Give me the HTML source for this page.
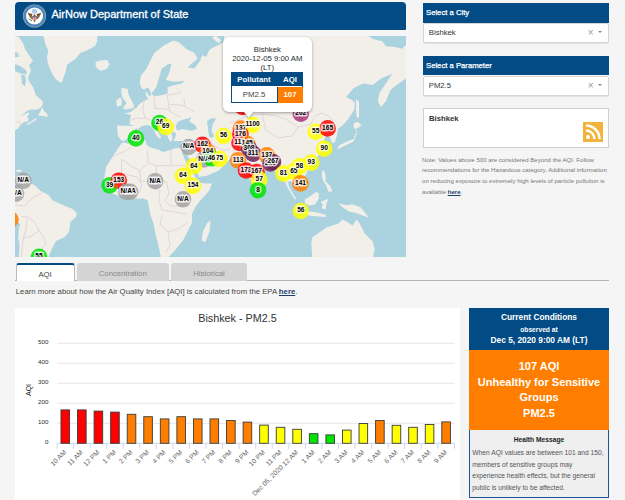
<!DOCTYPE html>
<html><head><meta charset="utf-8">
<style>
*{margin:0;padding:0;box-sizing:border-box}
html,body{width:625px;height:500px;overflow:hidden;background:#f5f5f5;font-family:"Liberation Sans",sans-serif;position:relative}
.a{position:absolute}
.wh{background:#fff}
.hdr{left:15px;top:2px;width:391px;height:28px;background:#034b85;border-radius:4px 4px 1px 1px}
.ttl{left:51.5px;top:8px;color:#fff;font-size:11px;line-height:12px;white-space:nowrap;-webkit-text-stroke:0.3px #fff}
.map{left:15px;top:36px;width:391px;height:221px;overflow:hidden;background:#aad3df}
.sh{left:423px;width:186px;height:19.5px;background:#034b85;color:#fff;font-size:7.7px;line-height:19px;padding-left:3px;white-space:nowrap;-webkit-text-stroke:0.25px #fff}
.sel{left:422.8px;width:186.2px;height:19.6px;background:#fff;border:1px solid #d6d6d6;border-radius:2px;font-size:7.7px;line-height:17px;padding-left:5px;color:#333;box-shadow:0 1px 1px rgba(0,0,0,.08)}
.sel .x{position:absolute;right:14.5px;top:0.5px;color:#9a9a9a;font-size:10px;line-height:16px}
.sel .car{position:absolute;right:6px;top:7px;width:0;height:0;border-left:2.3px solid transparent;border-right:2.3px solid transparent;border-top:2.5px solid #888}
.tab{top:263px;height:18px;font-size:7.7px;line-height:17px;padding-top:1.5px;text-align:center;color:#888;background:#d4d4d4;border-radius:3px 3px 0 0}
.note{left:422px;top:154.5px;width:190px;font-size:6.1px;line-height:10.7px;color:#777}
.cc{left:469px;top:308px;width:140px;height:190px;border:1px solid #1c5794;background:#efefef}
</style></head><body>
<!-- left white panel -->
<div class="a hdr"></div>
<svg class="a" style="left:22px;top:4px" width="25" height="25" viewBox="0 0 25 25">
<circle cx="12.5" cy="12" r="11.6" fill="#b9b58a"/>
<circle cx="12.5" cy="12" r="11" fill="#4a85c4"/>
<circle cx="12.5" cy="12" r="8.6" fill="#e9eef3"/>
<circle cx="12.5" cy="12" r="8" fill="#fff"/>
<circle cx="12.5" cy="7.2" r="2.6" fill="#a9cde8"/>
<path d="M5.5 8.5 Q7 12 9.5 12.5 L10.5 10 Q8 9.5 5.5 8.5Z M19.5 8.5 Q18 12 15.5 12.5 L14.5 10 Q17 9.5 19.5 8.5Z" fill="#6d4a2a"/>
<path d="M6 9.5 Q8 15 11 15.5 L12.5 18.5 L14 15.5 Q17 15 19 9.5 Q16.5 13 14 12 L12.5 10 L11 12 Q8.5 13 6 9.5Z" fill="#8a6238"/>
<rect x="10.8" y="12.2" width="3.4" height="4" fill="#fff"/>
<rect x="10.8" y="12.2" width="3.4" height="1.3" fill="#3a5a9a"/>
<path d="M11.3 13.5v2.7M12.5 13.5v2.7M13.7 13.5v2.7" stroke="#d03030" stroke-width="0.6"/>
<path d="M7 14.5 Q8 16.5 10 16.8" stroke="#4a8a3a" stroke-width="1" fill="none"/>
<circle cx="12.5" cy="4.8" r="0.6" fill="#fff"/>
</svg>
<div class="a ttl">AirNow Department of State</div>

<div class="a map" id="map"><svg class="a" style="left:0;top:0" width="391" height="221" viewBox="15 36 391 221">
<rect x="15" y="36" width="391" height="221" fill="#aad3df"/>
<polygon points="15,36 19,37 23,43 25,49 29,55 33,61 29,65 31,70 29,75 28,78 29,81 33,87 35.8,95 39,98.2 42.2,100.6 43,103.8 41.4,107 37.4,109.4 31,109.4 27,111 23,114.2 19.8,116.6 24.6,114.2 28.6,112.6 29.4,114.2 27,116.6 28.6,119 27.8,121.4 25.4,121.4 23,123 19.8,125.4 18.2,128.6 15,130.2" fill="#f2efe9" />
<polygon points="38.2,115 40.6,111 42.2,107 43.8,111 47,113.4 47.8,117.4 45.4,116.6 42.2,115.8 39,115.8" fill="#f2efe9" />
<polygon points="27,123.8 31,121.4 35.8,118.2 36.6,119.8 31,123 27.8,125" fill="#f2efe9" />
<polygon points="43.2,36 97.5,36 97,42 95,45.9 86.7,50.4 80.3,52.9 75.2,59.3 70,62.5 66.8,65.1 65.6,72.1 63.6,77.2 61.7,83 57.2,80.4 53.4,76 50.2,69.6 47.6,62.5 47,56.8 48.3,50.4 45.7,45.2 43.8,37.6" fill="#f2efe9" />
<polygon points="95.6,61.9 100.1,60.6 107.2,60 109.7,64.4 106.5,68.9 101.4,70.8 97.6,68.9 95.6,65.7" fill="#f2efe9" />
<polygon points="16,170 20.5,169.5 22,171.5 17,172" fill="#f2efe9" />
<polygon points="15,187.1 30.4,183.3 35.5,185.8 40.6,191 48.3,194.8 52.1,199.9 59.8,203.8 72.6,209 76.4,212.8 76.4,216.6 70.6,221.8 68.8,232 64.9,237.1 56,241 53.4,246.1 50.8,251.2 48.3,257.6 18.8,257.6 19.5,244.8 18.2,238.4 18.8,229.4 20.1,224.3 15,220" fill="#f2efe9" />
<polygon points="139.8,83.8 141.5,88 143.6,89.5 148.4,87.6 150.5,92 151.3,95.3 149,96 147.5,93 145.5,91.4 146,96 148.4,99.1 144,101 140.7,103 138,105.5 136.8,107.5 134,109 131,112 124.5,113.5 131,115 130,120 129.5,124 134,126 117.5,125.5 117,127 118,136 121,140 124,141.5 121,144 117,150 112.6,156.6 106,167.6 103.8,180.8 108.2,191.8 119.2,196.2 130.2,198.4 143.4,198.4 147.8,200.6 150,213.8 153.3,222.7 155.5,233.7 158.8,246.9 161,257.6 168,257.6 174.3,251.3 183.1,240.3 187.5,231.5 191.9,222.7 192,213.8 196,206 200.6,200 204.4,196.3 209.6,189.9 212.1,183.5 205.7,183.5 198,182.2 198,177.1 207,175.8 218.5,170.7 224.9,164.3 228.8,160.5 232,157 236,158 240,162 244,168 248,175 252,182 256,188 258,182 262,175 265,170 270,170 277,172 280,174 283,178 285,182 287.5,187.2 291.1,193.5 294.7,198.9 296.5,199.4 294.7,196.2 290.2,189 287.5,181.8 291,181 293,183 296,186 300,188 304,182 305,176 308,170 312,164 316,158 320.5,153.5 324.4,145 324,140 326,135.7 330.1,137.3 331.7,143 334.9,142.2 336.5,137.3 338,129 343,125 349,118 354,110 355,103 352,100 346,97 353.5,88.3 363.2,83.5 372.9,85.1 381,78.6 392.3,73.8 385.8,83.5 379.3,93.2 378,102 381,107 386,101 390.6,90 398,84 406,78.6 406,44.7 402,48.7 395.5,47.1 385.8,46.3 382.6,41.5 372.9,39 368,36 224,36 224,43 221.4,43.4 209.8,49.2 206,56.9 202.2,55 200.2,60.7 194.5,68.4 187.8,67.4 190.6,64.6 197.4,58.8 194.5,53 186.8,49.2 179.1,42.5 173.4,40.6 163.8,45.4 154.2,53 146.5,68.4 140.7,76.1" fill="#f2efe9" />
<polygon points="212,37 216,36 221,40 219,43 214,40" fill="#f2efe9" />
<polygon points="121.4,87.8 127.8,89.1 128.4,94.2 131.6,100.6 134.2,105.7 132.9,108.3 125.2,109.6 122.7,108.3 126.5,103.2 122.7,98 121.4,94.2" fill="#f2efe9" />
<polygon points="116.3,100.6 120.1,97.4 122,100 121.4,105.7 116.9,106.4" fill="#f2efe9" />
<polygon points="207.3,222.7 210.6,220.5 209.5,231.5 205.1,242.5 201.8,240.3 202.9,231.5 206.2,224.9" fill="#f2efe9" />
<polygon points="355.1,127.6 356.7,130.9 353.5,138.9 345.4,142.2 338.9,145.4 337.3,149.4 342.2,147 353.5,141.4 356.7,134.1" fill="#f2efe9" />
<polygon points="356,99 359,102 359,117 357,118 356,110 356,103" fill="#f2efe9" />
<polygon points="354,123 358,122 361.5,125 358,128 355,129 353.5,127" fill="#f2efe9" />
<polygon points="322,171 324,170 325,176 323,178" fill="#f2efe9" />
<polygon points="321.7,171.9 325.6,173.8 325.6,181.5 330.4,186.3 332.3,191.2 328.5,192.1 326.5,186.3 322.7,179.6" fill="#f2efe9" />
<polygon points="304.4,199.8 309.2,196.9 316,192.1 318.8,193.1 318.8,198.8 315,204.6 309.2,205.6 305.4,203.7" fill="#f2efe9" />
<polygon points="303,211 315,212 326,215 326,217 312,216 303,214" fill="#f2efe9" />
<polygon points="320.8,201.7 328.5,198.8 326.5,203.7 325.6,209.4 321.7,208.5 322.7,204.6" fill="#f2efe9" />
<polygon points="338.5,203.2 346.5,205.2 352.6,204.2 360.6,207.3 368.7,217.3 364.7,216.3 356.6,213.3 348.5,211.3 342.5,207.3" fill="#f2efe9" />
<polygon points="312.3,237.5 326.4,227.4 338.5,223.4 342.5,219.4 346.5,221.4 352.6,225.4 356.6,219.4 359.6,223.4 364.7,233.5 372.7,241.5 374.8,249.6 372.7,257.6 312.3,257.6 311.3,243.5" fill="#f2efe9" />
<polygon points="15,64 20,66 26,70 27,74 22,74 17,72 15,71" fill="#aad3df" />
<polygon points="21,75 25,75 26,80 25,86 22,84" fill="#aad3df" />
<polygon points="15,52 18,53 19,57 15,57" fill="#aad3df" />
<polygon points="123.5,141 127,139 131,134 134,131 136,128 137.6,129.5 141.4,126.3 146.6,125 150.4,125.7 154.2,130.8 156.8,136 159.4,138.5 161.3,137.2 158,132 154.5,127 151.5,123 154,121.5 158,124 162,128 166,131 167,134.6 169,140 171,142.3 172.5,138 171.5,133 174,131.5 176,134 175,138 173.4,141 181,141 188.8,142.3 189,147 183.7,148.7 176,148 169.6,150 163.2,152 158,149.4 150.4,147.4 146.6,144.9 145.3,139.8 144,140.4 137.6,142.3 127.4,143.6 123.5,142.5" fill="#aad3df" />
<polygon points="175.7,126.9 177,123 179,121.3 184.6,119 188,118.5 191.4,116.8 190.5,119 189.1,121.3 192,123 195.8,125.8 197,129.1 193,130.5 190.2,130.8 186,129.8 182.4,129.1 179,130 176.8,130.2" fill="#aad3df" />
<polygon points="207,121.3 210,119 213.8,117.9 216,119 214,122 212.6,124.6 211.5,130.2 213.8,135.8 212.6,138.1 209.3,137 208.5,133 208.2,129.1 207.5,125" fill="#aad3df" />
<polygon points="167.6,64.6 171.4,63.6 169.5,72.2 165.7,79.9 173.4,81.8 184.9,80.9 181,83.8 171.4,85.7 167.6,87.6 167.6,93.4 161.8,95.3 154.2,96.2 151.3,93.4 156.1,87.6 159,78 161.8,68.4" fill="#aad3df" />
<polygon points="182,149 184,150 190,160 195,168 199,176 198.5,181 196,178 191,170 186,162 182,153" fill="#aad3df" />
<polygon points="214,153 219,156 224,160 221,161 216,158" fill="#aad3df" />
<polyline points="105,165.6 112.7,156.6 117.8,154.1 124.2,151.5 130.6,147.7" fill="none" stroke="#d6c3d0" stroke-width="0.6"/>
<polyline points="121.6,159.2 130.6,165.6 139.6,170.7 148.5,163 156.2,165.6 169,165.6 171.6,166.9" fill="none" stroke="#d6c3d0" stroke-width="0.6"/>
<polyline points="147.2,150.2 148.5,163" fill="none" stroke="#d6c3d0" stroke-width="0.6"/>
<polyline points="170.9,149 170.9,165.6" fill="none" stroke="#d6c3d0" stroke-width="0.6"/>
<polyline points="171.6,165.6 185,165.6" fill="none" stroke="#d6c3d0" stroke-width="0.6"/>
<polyline points="156.2,165.6 156.2,177.1 166.4,182.2 169,193.8 165.2,200 170,206 178,206 186,204" fill="none" stroke="#d6c3d0" stroke-width="0.6"/>
<polyline points="121.6,159.2 121.6,173.3 115.2,178.4" fill="none" stroke="#d6c3d0" stroke-width="0.6"/>
<polyline points="121.6,173.3 137,177.1 142.1,184.8 138.3,193.8" fill="none" stroke="#d6c3d0" stroke-width="0.6"/>
<polyline points="139.6,170.7 140.9,181 151.1,182.2" fill="none" stroke="#d6c3d0" stroke-width="0.6"/>
<polyline points="151.1,182.2 160,191.2 158.8,200" fill="none" stroke="#d6c3d0" stroke-width="0.6"/>
<polyline points="158.8,200 162,210 175,212 186,214" fill="none" stroke="#d6c3d0" stroke-width="0.6"/>
<polyline points="162,215 160,225 168,232 180,228 188,222" fill="none" stroke="#d6c3d0" stroke-width="0.6"/>
<polyline points="168,232 170,245 166,252" fill="none" stroke="#d6c3d0" stroke-width="0.6"/>
<polyline points="154.3,97.8 155.6,109.3" fill="none" stroke="#d6c3d0" stroke-width="0.6"/>
<polyline points="144.1,101.6 142.8,110.6 145.4,118.3" fill="none" stroke="#d6c3d0" stroke-width="0.6"/>
<polyline points="167.1,95.2 169.7,110.6" fill="none" stroke="#d6c3d0" stroke-width="0.6"/>
<polyline points="169.7,104.2 183.8,105.5 194,111.9" fill="none" stroke="#d6c3d0" stroke-width="0.6"/>
<polyline points="183.8,98 185,105.5" fill="none" stroke="#d6c3d0" stroke-width="0.6"/>
<polyline points="153,108 167,109.3 174.8,114.4 181,117" fill="none" stroke="#d6c3d0" stroke-width="0.6"/>
<polyline points="167.1,95.2 181,92.7 176,87.5" fill="none" stroke="#d6c3d0" stroke-width="0.6"/>
<polyline points="131,120 137,118 145.4,118.3 150,120" fill="none" stroke="#d6c3d0" stroke-width="0.6"/>
<polyline points="275.8,115.8 285.4,119 298.2,127 311,123.8 315,115.8 322,113 330,117 334,123" fill="none" stroke="#d6c3d0" stroke-width="0.6"/>
<polyline points="230,123 238,120 246,116 262,114 275.8,115.8" fill="none" stroke="#d6c3d0" stroke-width="0.6"/>
<polyline points="262,114 266,130 278,138 292,136 298.2,127" fill="none" stroke="#d6c3d0" stroke-width="0.6"/>
<polyline points="200,138 210,142 215,146 222,150 230,150" fill="none" stroke="#d6c3d0" stroke-width="0.6"/>
<polyline points="232,157 234,150 236,144" fill="none" stroke="#d6c3d0" stroke-width="0.6"/>
<polyline points="21.4,216.6 27.8,216.6 34.2,221.8 39.3,230.7 44.4,238.4 45.7,243.5 40.6,251.2" fill="none" stroke="#d6c3d0" stroke-width="0.6"/>
<polyline points="15,205 25,206 30,200 35,196 42,193" fill="none" stroke="#d6c3d0" stroke-width="0.6"/>
<polyline points="22.7,238 30,237 39.3,230.7" fill="none" stroke="#d6c3d0" stroke-width="0.6"/>
<polyline points="27,218 26,230 23,240 21,257" fill="none" stroke="#d6c3d0" stroke-width="0.6"/>
<polyline points="20.8,124 19,121 16,123" fill="none" stroke="#d6c3d0" stroke-width="0.6"/>
<circle cx="16" cy="193.6" r="8.3" fill="#a3a3a3" fill-opacity="0.85"/>
<circle cx="23.3" cy="180.8" r="8.3" fill="#a3a3a3" fill-opacity="0.85"/>
<circle cx="10.5" cy="219.5" r="8.3" fill="#ff7e00" fill-opacity="0.85"/>
<circle cx="39" cy="256.8" r="8.3" fill="#00e400" fill-opacity="0.85"/>
<circle cx="109.6" cy="185.3" r="8.3" fill="#00e400" fill-opacity="0.85"/>
<circle cx="118.8" cy="180.7" r="8.3" fill="#ff0000" fill-opacity="0.85"/>
<circle cx="130.1" cy="191.8" r="8.3" fill="#a3a3a3" fill-opacity="0.85"/>
<circle cx="126.3" cy="191.8" r="8.3" fill="#a3a3a3" fill-opacity="0.85"/>
<circle cx="155.2" cy="181.2" r="8.3" fill="#a3a3a3" fill-opacity="0.85"/>
<circle cx="183" cy="199.3" r="8.3" fill="#a3a3a3" fill-opacity="0.85"/>
<circle cx="135.9" cy="138.4" r="8.3" fill="#00e400" fill-opacity="0.85"/>
<circle cx="159.5" cy="123" r="8.3" fill="#00e400" fill-opacity="0.85"/>
<circle cx="165.7" cy="126.9" r="8.3" fill="#ffff00" fill-opacity="0.85"/>
<circle cx="188.7" cy="147" r="8.3" fill="#a3a3a3" fill-opacity="0.85"/>
<circle cx="202.5" cy="144.8" r="8.3" fill="#ff0000" fill-opacity="0.85"/>
<circle cx="207.8" cy="151.8" r="8.3" fill="#ff7e00" fill-opacity="0.85"/>
<circle cx="204" cy="159.5" r="8.3" fill="#a3a3a3" fill-opacity="0.85"/>
<circle cx="211.6" cy="158.3" r="8.3" fill="#00e400" fill-opacity="0.85"/>
<circle cx="219.6" cy="159" r="8.3" fill="#ffff00" fill-opacity="0.85"/>
<circle cx="223.6" cy="136" r="8.3" fill="#ffff00" fill-opacity="0.85"/>
<circle cx="183" cy="175.8" r="8.3" fill="#ffff00" fill-opacity="0.85"/>
<circle cx="193.8" cy="166.2" r="8.3" fill="#ffff00" fill-opacity="0.85"/>
<circle cx="193" cy="186" r="8.3" fill="#ffff00" fill-opacity="0.85"/>
<circle cx="242.5" cy="107" r="8.3" fill="#ff0000" fill-opacity="0.85"/>
<circle cx="300.8" cy="113.6" r="8.3" fill="#aa3377" fill-opacity="0.85"/>
<circle cx="240.8" cy="128.6" r="8.3" fill="#ff7e00" fill-opacity="0.85"/>
<circle cx="252.6" cy="125" r="8.3" fill="#ffff00" fill-opacity="0.85"/>
<circle cx="240.4" cy="134.2" r="8.3" fill="#ff0000" fill-opacity="0.85"/>
<circle cx="239.5" cy="143" r="8.3" fill="#ff0000" fill-opacity="0.85"/>
<circle cx="247.3" cy="144" r="8.3" fill="#ff7e00" fill-opacity="0.85"/>
<circle cx="249" cy="148.5" r="8.3" fill="#6b2258" fill-opacity="0.85"/>
<circle cx="253" cy="153.6" r="8.3" fill="#6b2258" fill-opacity="0.85"/>
<circle cx="238" cy="160.3" r="8.3" fill="#ff7e00" fill-opacity="0.85"/>
<circle cx="266.8" cy="155.3" r="8.3" fill="#ff7e00" fill-opacity="0.85"/>
<circle cx="270.5" cy="163.5" r="8.3" fill="#6b2258" fill-opacity="0.85"/>
<circle cx="273" cy="162" r="8.3" fill="#6b2258" fill-opacity="0.85"/>
<circle cx="246" cy="170.5" r="8.3" fill="#ff0000" fill-opacity="0.85"/>
<circle cx="256.5" cy="172" r="8.3" fill="#ff0000" fill-opacity="0.85"/>
<circle cx="259.2" cy="179.4" r="8.3" fill="#ffff00" fill-opacity="0.85"/>
<circle cx="258" cy="190.2" r="8.3" fill="#00e400" fill-opacity="0.85"/>
<circle cx="283.4" cy="173.6" r="8.3" fill="#ffff00" fill-opacity="0.85"/>
<circle cx="293.8" cy="171.5" r="8.3" fill="#ffff00" fill-opacity="0.85"/>
<circle cx="299.4" cy="166.2" r="8.3" fill="#ffff00" fill-opacity="0.85"/>
<circle cx="311.2" cy="162.6" r="8.3" fill="#ffff00" fill-opacity="0.85"/>
<circle cx="300.5" cy="183.4" r="8.3" fill="#ff7e00" fill-opacity="0.85"/>
<circle cx="300.8" cy="211" r="8.3" fill="#ffff00" fill-opacity="0.85"/>
<circle cx="324.2" cy="148.7" r="8.3" fill="#ffff00" fill-opacity="0.85"/>
<circle cx="315.7" cy="131.8" r="8.3" fill="#ffff00" fill-opacity="0.85"/>
<circle cx="327.6" cy="128.4" r="8.3" fill="#ff0000" fill-opacity="0.85"/>
<text x="16" y="195.0" text-anchor="middle" font-size="6.6" font-weight="bold" fill="#000" stroke="#fff" stroke-width="3" stroke-opacity="0.75" stroke-linejoin="round" paint-order="stroke">N/A</text>
<text x="23.3" y="182.20000000000002" text-anchor="middle" font-size="6.6" font-weight="bold" fill="#000" stroke="#fff" stroke-width="3" stroke-opacity="0.75" stroke-linejoin="round" paint-order="stroke">N/A</text>
<text x="39" y="258.2" text-anchor="middle" font-size="6.6" font-weight="bold" fill="#000" stroke="#fff" stroke-width="3" stroke-opacity="0.75" stroke-linejoin="round" paint-order="stroke">55</text>
<text x="109.6" y="186.70000000000002" text-anchor="middle" font-size="6.6" font-weight="bold" fill="#000" stroke="#fff" stroke-width="3" stroke-opacity="0.75" stroke-linejoin="round" paint-order="stroke">39</text>
<text x="118.8" y="182.1" text-anchor="middle" font-size="6.6" font-weight="bold" fill="#000" stroke="#fff" stroke-width="3" stroke-opacity="0.75" stroke-linejoin="round" paint-order="stroke">153</text>
<text x="130.1" y="193.20000000000002" text-anchor="middle" font-size="6.6" font-weight="bold" fill="#000" stroke="#fff" stroke-width="3" stroke-opacity="0.75" stroke-linejoin="round" paint-order="stroke">N/A</text>
<text x="126.3" y="193.20000000000002" text-anchor="middle" font-size="6.6" font-weight="bold" fill="#000" stroke="#fff" stroke-width="3" stroke-opacity="0.75" stroke-linejoin="round" paint-order="stroke">N/A</text>
<text x="155.2" y="182.6" text-anchor="middle" font-size="6.6" font-weight="bold" fill="#000" stroke="#fff" stroke-width="3" stroke-opacity="0.75" stroke-linejoin="round" paint-order="stroke">N/A</text>
<text x="183" y="200.70000000000002" text-anchor="middle" font-size="6.6" font-weight="bold" fill="#000" stroke="#fff" stroke-width="3" stroke-opacity="0.75" stroke-linejoin="round" paint-order="stroke">N/A</text>
<text x="135.9" y="139.8" text-anchor="middle" font-size="6.6" font-weight="bold" fill="#000" stroke="#fff" stroke-width="3" stroke-opacity="0.75" stroke-linejoin="round" paint-order="stroke">40</text>
<text x="159.5" y="124.4" text-anchor="middle" font-size="6.6" font-weight="bold" fill="#000" stroke="#fff" stroke-width="3" stroke-opacity="0.75" stroke-linejoin="round" paint-order="stroke">26</text>
<text x="165.7" y="128.3" text-anchor="middle" font-size="6.6" font-weight="bold" fill="#000" stroke="#fff" stroke-width="3" stroke-opacity="0.75" stroke-linejoin="round" paint-order="stroke">69</text>
<text x="188.7" y="148.4" text-anchor="middle" font-size="6.6" font-weight="bold" fill="#000" stroke="#fff" stroke-width="3" stroke-opacity="0.75" stroke-linejoin="round" paint-order="stroke">N/A</text>
<text x="202.5" y="146.20000000000002" text-anchor="middle" font-size="6.6" font-weight="bold" fill="#000" stroke="#fff" stroke-width="3" stroke-opacity="0.75" stroke-linejoin="round" paint-order="stroke">162</text>
<text x="207.8" y="153.20000000000002" text-anchor="middle" font-size="6.6" font-weight="bold" fill="#000" stroke="#fff" stroke-width="3" stroke-opacity="0.75" stroke-linejoin="round" paint-order="stroke">104</text>
<text x="204" y="160.9" text-anchor="middle" font-size="6.6" font-weight="bold" fill="#000" stroke="#fff" stroke-width="3" stroke-opacity="0.75" stroke-linejoin="round" paint-order="stroke">N/A</text>
<text x="211.6" y="159.70000000000002" text-anchor="middle" font-size="6.6" font-weight="bold" fill="#000" stroke="#fff" stroke-width="3" stroke-opacity="0.75" stroke-linejoin="round" paint-order="stroke">46</text>
<text x="219.6" y="160.4" text-anchor="middle" font-size="6.6" font-weight="bold" fill="#000" stroke="#fff" stroke-width="3" stroke-opacity="0.75" stroke-linejoin="round" paint-order="stroke">75</text>
<text x="223.6" y="137.4" text-anchor="middle" font-size="6.6" font-weight="bold" fill="#000" stroke="#fff" stroke-width="3" stroke-opacity="0.75" stroke-linejoin="round" paint-order="stroke">56</text>
<text x="183" y="177.20000000000002" text-anchor="middle" font-size="6.6" font-weight="bold" fill="#000" stroke="#fff" stroke-width="3" stroke-opacity="0.75" stroke-linejoin="round" paint-order="stroke">64</text>
<text x="193.8" y="167.6" text-anchor="middle" font-size="6.6" font-weight="bold" fill="#000" stroke="#fff" stroke-width="3" stroke-opacity="0.75" stroke-linejoin="round" paint-order="stroke">64</text>
<text x="193" y="187.4" text-anchor="middle" font-size="6.6" font-weight="bold" fill="#000" stroke="#fff" stroke-width="3" stroke-opacity="0.75" stroke-linejoin="round" paint-order="stroke">154</text>
<text x="300.8" y="115.0" text-anchor="middle" font-size="6.6" font-weight="bold" fill="#000" stroke="#fff" stroke-width="3" stroke-opacity="0.75" stroke-linejoin="round" paint-order="stroke">202</text>
<text x="240.8" y="130.0" text-anchor="middle" font-size="6.6" font-weight="bold" fill="#000" stroke="#fff" stroke-width="3" stroke-opacity="0.75" stroke-linejoin="round" paint-order="stroke">137</text>
<text x="252.6" y="126.4" text-anchor="middle" font-size="6.6" font-weight="bold" fill="#000" stroke="#fff" stroke-width="3" stroke-opacity="0.75" stroke-linejoin="round" paint-order="stroke">1100</text>
<text x="240.4" y="135.6" text-anchor="middle" font-size="6.6" font-weight="bold" fill="#000" stroke="#fff" stroke-width="3" stroke-opacity="0.75" stroke-linejoin="round" paint-order="stroke">176</text>
<text x="239.5" y="144.4" text-anchor="middle" font-size="6.6" font-weight="bold" fill="#000" stroke="#fff" stroke-width="3" stroke-opacity="0.75" stroke-linejoin="round" paint-order="stroke">111</text>
<text x="247.3" y="145.4" text-anchor="middle" font-size="6.6" font-weight="bold" fill="#000" stroke="#fff" stroke-width="3" stroke-opacity="0.75" stroke-linejoin="round" paint-order="stroke">145</text>
<text x="249" y="149.9" text-anchor="middle" font-size="6.6" font-weight="bold" fill="#000" stroke="#fff" stroke-width="3" stroke-opacity="0.75" stroke-linejoin="round" paint-order="stroke">308</text>
<text x="253" y="155.0" text-anchor="middle" font-size="6.6" font-weight="bold" fill="#000" stroke="#fff" stroke-width="3" stroke-opacity="0.75" stroke-linejoin="round" paint-order="stroke">311</text>
<text x="238" y="161.70000000000002" text-anchor="middle" font-size="6.6" font-weight="bold" fill="#000" stroke="#fff" stroke-width="3" stroke-opacity="0.75" stroke-linejoin="round" paint-order="stroke">113</text>
<text x="266.8" y="156.70000000000002" text-anchor="middle" font-size="6.6" font-weight="bold" fill="#000" stroke="#fff" stroke-width="3" stroke-opacity="0.75" stroke-linejoin="round" paint-order="stroke">137</text>
<text x="270.5" y="164.9" text-anchor="middle" font-size="6.6" font-weight="bold" fill="#000" stroke="#fff" stroke-width="3" stroke-opacity="0.75" stroke-linejoin="round" paint-order="stroke">255</text>
<text x="273" y="163.4" text-anchor="middle" font-size="6.6" font-weight="bold" fill="#000" stroke="#fff" stroke-width="3" stroke-opacity="0.75" stroke-linejoin="round" paint-order="stroke">267</text>
<text x="246" y="171.9" text-anchor="middle" font-size="6.6" font-weight="bold" fill="#000" stroke="#fff" stroke-width="3" stroke-opacity="0.75" stroke-linejoin="round" paint-order="stroke">173</text>
<text x="256.5" y="173.4" text-anchor="middle" font-size="6.6" font-weight="bold" fill="#000" stroke="#fff" stroke-width="3" stroke-opacity="0.75" stroke-linejoin="round" paint-order="stroke">167</text>
<text x="259.2" y="180.8" text-anchor="middle" font-size="6.6" font-weight="bold" fill="#000" stroke="#fff" stroke-width="3" stroke-opacity="0.75" stroke-linejoin="round" paint-order="stroke">57</text>
<text x="258" y="191.6" text-anchor="middle" font-size="6.6" font-weight="bold" fill="#000" stroke="#fff" stroke-width="3" stroke-opacity="0.75" stroke-linejoin="round" paint-order="stroke">8</text>
<text x="283.4" y="175.0" text-anchor="middle" font-size="6.6" font-weight="bold" fill="#000" stroke="#fff" stroke-width="3" stroke-opacity="0.75" stroke-linejoin="round" paint-order="stroke">81</text>
<text x="293.8" y="172.9" text-anchor="middle" font-size="6.6" font-weight="bold" fill="#000" stroke="#fff" stroke-width="3" stroke-opacity="0.75" stroke-linejoin="round" paint-order="stroke">65</text>
<text x="299.4" y="167.6" text-anchor="middle" font-size="6.6" font-weight="bold" fill="#000" stroke="#fff" stroke-width="3" stroke-opacity="0.75" stroke-linejoin="round" paint-order="stroke">58</text>
<text x="311.2" y="164.0" text-anchor="middle" font-size="6.6" font-weight="bold" fill="#000" stroke="#fff" stroke-width="3" stroke-opacity="0.75" stroke-linejoin="round" paint-order="stroke">93</text>
<text x="300.5" y="184.8" text-anchor="middle" font-size="6.6" font-weight="bold" fill="#000" stroke="#fff" stroke-width="3" stroke-opacity="0.75" stroke-linejoin="round" paint-order="stroke">141</text>
<text x="300.8" y="212.4" text-anchor="middle" font-size="6.6" font-weight="bold" fill="#000" stroke="#fff" stroke-width="3" stroke-opacity="0.75" stroke-linejoin="round" paint-order="stroke">56</text>
<text x="324.2" y="150.1" text-anchor="middle" font-size="6.6" font-weight="bold" fill="#000" stroke="#fff" stroke-width="3" stroke-opacity="0.75" stroke-linejoin="round" paint-order="stroke">90</text>
<text x="315.7" y="133.20000000000002" text-anchor="middle" font-size="6.6" font-weight="bold" fill="#000" stroke="#fff" stroke-width="3" stroke-opacity="0.75" stroke-linejoin="round" paint-order="stroke">55</text>
<text x="327.6" y="129.8" text-anchor="middle" font-size="6.6" font-weight="bold" fill="#000" stroke="#fff" stroke-width="3" stroke-opacity="0.75" stroke-linejoin="round" paint-order="stroke">165</text>
<rect x="114.6" y="184.6" width="3.4" height="3.4" fill="#d9630f"/>
</svg></div>

<!-- popup -->
<div class="a" style="left:222.7px;top:37.4px;width:89.3px;height:75px;background:#fff;border-radius:6px;box-shadow:0 1px 3px rgba(0,0,0,.35)"></div>
<svg class="a" style="left:240px;top:111px" width="18" height="9" viewBox="240 111 18 9"><path d="M243.6 111.5 L248.6 117.4 L253.6 111.5Z" fill="#fff" style="filter:drop-shadow(0 1px 1px rgba(0,0,0,.3))"/></svg>
<div class="a" style="left:222.7px;top:46.4px;width:89.3px;text-align:center;font-size:7.77px;line-height:8.6px;color:#2a2a2a">Bishkek<br>2020-12-05 9:00 AM<br>(LT)</div>
<div class="a" style="left:231px;top:71.8px;width:72px;height:31.5px;border:1px solid #0b4b86;background:#fff"></div>
<div class="a" style="left:231px;top:71.8px;width:72px;height:14.7px;background:#034b85"></div>
<div class="a" style="left:277.1px;top:86.5px;width:25.9px;height:16.8px;background:#ff7e00;border-left:1px solid #0b4b86"></div>
<div class="a" style="left:231px;top:75.5px;width:46px;text-align:center;font-size:7.8px;font-weight:bold;color:#fff;line-height:8px">Pollutant</div>
<div class="a" style="left:277.1px;top:75.5px;width:25.9px;text-align:center;font-size:7.8px;font-weight:bold;color:#fff;line-height:8px">AQI</div>
<div class="a" style="left:231px;top:91.3px;width:46px;text-align:center;font-size:7.8px;color:#444;line-height:8px">PM2.5</div>
<div class="a" style="left:277.1px;top:91.3px;width:25.9px;text-align:center;font-size:7.8px;font-weight:bold;color:#fff;line-height:8px">107</div>

<!-- right column -->
<div class="a sh" style="top:3px">Select a City</div>
<div class="a sel" style="top:23.3px">Bishkek<span class="x">×</span><span class="car"></span></div>
<div class="a sh" style="top:55.8px;height:19.3px">Select a Parameter</div>
<div class="a sel" style="top:76px">PM2.5<span class="x">×</span><span class="car"></span></div>
<div class="a" style="left:422.5px;top:107.5px;width:186.5px;height:40.5px;background:#fff;border:1px solid #d0d0d0"></div>
<div class="a" style="left:429px;top:114px;font-size:7.7px;font-weight:bold;color:#333;line-height:9px">Bishkek</div>
<svg class="a" style="left:583px;top:122px" width="20" height="20" viewBox="0 0 20 20">
<rect width="20" height="20" fill="#f2b33d"/>
<circle cx="5" cy="15" r="2" fill="#fff"/>
<path d="M3 8.5 A8.5 8.5 0 0 1 11.5 17" stroke="#fff" stroke-width="2.4" fill="none"/>
<path d="M3 3.5 A13.5 13.5 0 0 1 16.5 17" stroke="#fff" stroke-width="2.4" fill="none"/>
</svg>
<div class="a note">Note: Values above 500 are considered Beyond the AQI. Follow recommendations for the Hazardous category. Additional information on reducing exposure to extremely high levels of particle pollution is available <b style="color:#1d3f6e;text-decoration:underline">here</b>.</div>

<!-- tabs -->
<div class="a" style="left:15px;top:280px;width:594px;height:1.3px;background:#b5b5b5"></div>
<div class="a tab" style="left:15.5px;width:59px;background:#fff;border:1px solid #bbb;border-top:2px solid #034b85;border-bottom:none;color:#444;padding-top:0.5px">AQI</div>
<div class="a tab" style="left:76.5px;width:92.5px">Concentration</div>
<div class="a tab" style="left:171px;width:76px">Historical</div>
<div class="a" style="left:15.8px;top:287px;font-size:7.75px;line-height:9px;color:#444;white-space:nowrap">Learn more about how the Air Quality Index [AQI] is calculated from the EPA <b style="color:#1d3f6e;text-decoration:underline;font-weight:bold">here</b>.</div>

<!-- chart -->
<div class="a wh" style="left:15px;top:308px;width:445px;height:192px"></div>
<div id="chart"><svg class="a" style="left:0;top:0" width="625" height="500" viewBox="0 0 625 500">
<line x1="57.0" x2="454.4" y1="423.3" y2="423.3" stroke="#e6e6e6" stroke-width="1"/>
<text x="48.4" y="424.1" text-anchor="end" font-size="6.2" fill="#2a2a2a">100</text>
<line x1="57.0" x2="454.4" y1="403.3" y2="403.3" stroke="#e6e6e6" stroke-width="1"/>
<text x="48.4" y="404.1" text-anchor="end" font-size="6.2" fill="#2a2a2a">200</text>
<line x1="57.0" x2="454.4" y1="383.3" y2="383.3" stroke="#e6e6e6" stroke-width="1"/>
<text x="48.4" y="384.1" text-anchor="end" font-size="6.2" fill="#2a2a2a">300</text>
<line x1="57.0" x2="454.4" y1="363.3" y2="363.3" stroke="#e6e6e6" stroke-width="1"/>
<text x="48.4" y="364.1" text-anchor="end" font-size="6.2" fill="#2a2a2a">400</text>
<line x1="57.0" x2="454.4" y1="343.3" y2="343.3" stroke="#e6e6e6" stroke-width="1"/>
<text x="48.4" y="344.1" text-anchor="end" font-size="6.2" fill="#2a2a2a">500</text>
<text x="48.4" y="444.1" text-anchor="end" font-size="6.2" fill="#2a2a2a">0</text>
<line x1="57.0" x2="454.4" y1="443.3" y2="443.3" stroke="#ccd6eb" stroke-width="1"/>
<line x1="57.00" x2="57.00" y1="443.3" y2="448.8" stroke="#ccd6eb" stroke-width="1"/>
<line x1="73.56" x2="73.56" y1="443.3" y2="448.8" stroke="#ccd6eb" stroke-width="1"/>
<line x1="90.12" x2="90.12" y1="443.3" y2="448.8" stroke="#ccd6eb" stroke-width="1"/>
<line x1="106.67" x2="106.67" y1="443.3" y2="448.8" stroke="#ccd6eb" stroke-width="1"/>
<line x1="123.23" x2="123.23" y1="443.3" y2="448.8" stroke="#ccd6eb" stroke-width="1"/>
<line x1="139.79" x2="139.79" y1="443.3" y2="448.8" stroke="#ccd6eb" stroke-width="1"/>
<line x1="156.35" x2="156.35" y1="443.3" y2="448.8" stroke="#ccd6eb" stroke-width="1"/>
<line x1="172.91" x2="172.91" y1="443.3" y2="448.8" stroke="#ccd6eb" stroke-width="1"/>
<line x1="189.47" x2="189.47" y1="443.3" y2="448.8" stroke="#ccd6eb" stroke-width="1"/>
<line x1="206.03" x2="206.03" y1="443.3" y2="448.8" stroke="#ccd6eb" stroke-width="1"/>
<line x1="222.58" x2="222.58" y1="443.3" y2="448.8" stroke="#ccd6eb" stroke-width="1"/>
<line x1="239.14" x2="239.14" y1="443.3" y2="448.8" stroke="#ccd6eb" stroke-width="1"/>
<line x1="255.70" x2="255.70" y1="443.3" y2="448.8" stroke="#ccd6eb" stroke-width="1"/>
<line x1="272.26" x2="272.26" y1="443.3" y2="448.8" stroke="#ccd6eb" stroke-width="1"/>
<line x1="288.82" x2="288.82" y1="443.3" y2="448.8" stroke="#ccd6eb" stroke-width="1"/>
<line x1="305.38" x2="305.38" y1="443.3" y2="448.8" stroke="#ccd6eb" stroke-width="1"/>
<line x1="321.93" x2="321.93" y1="443.3" y2="448.8" stroke="#ccd6eb" stroke-width="1"/>
<line x1="338.49" x2="338.49" y1="443.3" y2="448.8" stroke="#ccd6eb" stroke-width="1"/>
<line x1="355.05" x2="355.05" y1="443.3" y2="448.8" stroke="#ccd6eb" stroke-width="1"/>
<line x1="371.61" x2="371.61" y1="443.3" y2="448.8" stroke="#ccd6eb" stroke-width="1"/>
<line x1="388.17" x2="388.17" y1="443.3" y2="448.8" stroke="#ccd6eb" stroke-width="1"/>
<line x1="404.73" x2="404.73" y1="443.3" y2="448.8" stroke="#ccd6eb" stroke-width="1"/>
<line x1="421.28" x2="421.28" y1="443.3" y2="448.8" stroke="#ccd6eb" stroke-width="1"/>
<line x1="437.84" x2="437.84" y1="443.3" y2="448.8" stroke="#ccd6eb" stroke-width="1"/>
<line x1="454.40" x2="454.40" y1="443.3" y2="448.8" stroke="#ccd6eb" stroke-width="1"/>
<rect x="60.98" y="409.90" width="8.6" height="33.40" fill="#ff0000" stroke="#3a3a3a" stroke-width="0.9"/>
<rect x="77.54" y="409.90" width="8.6" height="33.40" fill="#ff0000" stroke="#3a3a3a" stroke-width="0.9"/>
<rect x="94.10" y="411.10" width="8.6" height="32.20" fill="#ff0000" stroke="#3a3a3a" stroke-width="0.9"/>
<rect x="110.65" y="412.10" width="8.6" height="31.20" fill="#ff0000" stroke="#3a3a3a" stroke-width="0.9"/>
<rect x="127.21" y="414.30" width="8.6" height="29.00" fill="#ff7e00" stroke="#3a3a3a" stroke-width="0.9"/>
<rect x="143.77" y="416.70" width="8.6" height="26.60" fill="#ff7e00" stroke="#3a3a3a" stroke-width="0.9"/>
<rect x="160.33" y="418.90" width="8.6" height="24.40" fill="#ff7e00" stroke="#3a3a3a" stroke-width="0.9"/>
<rect x="176.89" y="416.70" width="8.6" height="26.60" fill="#ff7e00" stroke="#3a3a3a" stroke-width="0.9"/>
<rect x="193.45" y="418.90" width="8.6" height="24.40" fill="#ff7e00" stroke="#3a3a3a" stroke-width="0.9"/>
<rect x="210.00" y="418.90" width="8.6" height="24.40" fill="#ff7e00" stroke="#3a3a3a" stroke-width="0.9"/>
<rect x="226.56" y="420.50" width="8.6" height="22.80" fill="#ff7e00" stroke="#3a3a3a" stroke-width="0.9"/>
<rect x="243.12" y="422.10" width="8.6" height="21.20" fill="#ff7e00" stroke="#3a3a3a" stroke-width="0.9"/>
<rect x="259.68" y="425.10" width="8.6" height="18.20" fill="#ffff00" stroke="#3a3a3a" stroke-width="0.9"/>
<rect x="276.24" y="427.30" width="8.6" height="16.00" fill="#ffff00" stroke="#3a3a3a" stroke-width="0.9"/>
<rect x="292.80" y="429.30" width="8.6" height="14.00" fill="#ffff00" stroke="#3a3a3a" stroke-width="0.9"/>
<rect x="309.35" y="433.70" width="8.6" height="9.60" fill="#00e400" stroke="#3a3a3a" stroke-width="0.9"/>
<rect x="325.91" y="434.90" width="8.6" height="8.40" fill="#00e400" stroke="#3a3a3a" stroke-width="0.9"/>
<rect x="342.47" y="430.10" width="8.6" height="13.20" fill="#ffff00" stroke="#3a3a3a" stroke-width="0.9"/>
<rect x="359.03" y="423.50" width="8.6" height="19.80" fill="#ffff00" stroke="#3a3a3a" stroke-width="0.9"/>
<rect x="375.59" y="420.50" width="8.6" height="22.80" fill="#ff7e00" stroke="#3a3a3a" stroke-width="0.9"/>
<rect x="392.15" y="425.30" width="8.6" height="18.00" fill="#ffff00" stroke="#3a3a3a" stroke-width="0.9"/>
<rect x="408.70" y="427.30" width="8.6" height="16.00" fill="#ffff00" stroke="#3a3a3a" stroke-width="0.9"/>
<rect x="425.26" y="424.50" width="8.6" height="18.80" fill="#ffff00" stroke="#3a3a3a" stroke-width="0.9"/>
<rect x="441.82" y="421.90" width="8.6" height="21.40" fill="#ff7e00" stroke="#3a3a3a" stroke-width="0.9"/>
<text transform="translate(66.78,452.8) rotate(-45)" text-anchor="end" font-size="6.8" fill="#666">10 AM</text>
<text transform="translate(83.34,452.8) rotate(-45)" text-anchor="end" font-size="6.8" fill="#666">11 AM</text>
<text transform="translate(99.90,452.8) rotate(-45)" text-anchor="end" font-size="6.8" fill="#666">12 PM</text>
<text transform="translate(116.45,452.8) rotate(-45)" text-anchor="end" font-size="6.8" fill="#666">1 PM</text>
<text transform="translate(133.01,452.8) rotate(-45)" text-anchor="end" font-size="6.8" fill="#666">2 PM</text>
<text transform="translate(149.57,452.8) rotate(-45)" text-anchor="end" font-size="6.8" fill="#666">3 PM</text>
<text transform="translate(166.13,452.8) rotate(-45)" text-anchor="end" font-size="6.8" fill="#666">4 PM</text>
<text transform="translate(182.69,452.8) rotate(-45)" text-anchor="end" font-size="6.8" fill="#666">5 PM</text>
<text transform="translate(199.25,452.8) rotate(-45)" text-anchor="end" font-size="6.8" fill="#666">6 PM</text>
<text transform="translate(215.80,452.8) rotate(-45)" text-anchor="end" font-size="6.8" fill="#666">7 PM</text>
<text transform="translate(232.36,452.8) rotate(-45)" text-anchor="end" font-size="6.8" fill="#666">8 PM</text>
<text transform="translate(248.92,452.8) rotate(-45)" text-anchor="end" font-size="6.8" fill="#666">9 PM</text>
<text transform="translate(265.48,452.8) rotate(-45)" text-anchor="end" font-size="6.8" fill="#666">10 PM</text>
<text transform="translate(282.04,452.8) rotate(-45)" text-anchor="end" font-size="6.8" fill="#666">11 PM</text>
<text transform="translate(298.60,452.8) rotate(-45)" text-anchor="end" font-size="6.8" fill="#666">Dec 05, 2020 12 AM</text>
<text transform="translate(315.15,452.8) rotate(-45)" text-anchor="end" font-size="6.8" fill="#666">1 AM</text>
<text transform="translate(331.71,452.8) rotate(-45)" text-anchor="end" font-size="6.8" fill="#666">2 AM</text>
<text transform="translate(348.27,452.8) rotate(-45)" text-anchor="end" font-size="6.8" fill="#666">3 AM</text>
<text transform="translate(364.83,452.8) rotate(-45)" text-anchor="end" font-size="6.8" fill="#666">4 AM</text>
<text transform="translate(381.39,452.8) rotate(-45)" text-anchor="end" font-size="6.8" fill="#666">5 AM</text>
<text transform="translate(397.95,452.8) rotate(-45)" text-anchor="end" font-size="6.8" fill="#666">6 AM</text>
<text transform="translate(414.50,452.8) rotate(-45)" text-anchor="end" font-size="6.8" fill="#666">7 AM</text>
<text transform="translate(431.06,452.8) rotate(-45)" text-anchor="end" font-size="6.8" fill="#666">8 AM</text>
<text transform="translate(447.62,452.8) rotate(-45)" text-anchor="end" font-size="6.8" fill="#666">9 AM</text>
<text transform="translate(30.8,390) rotate(-90)" text-anchor="middle" font-size="7" fill="#222">AQI</text>
<text x="237.5" y="322" text-anchor="middle" font-size="10.8" fill="#333">Bishkek - PM2.5</text>
</svg></div>

<!-- current conditions -->
<div class="a cc"></div>
<div class="a" style="left:469px;top:308px;width:140px;height:42px;background:#034b85;color:#fff;text-align:center;font-weight:bold">
<div style="font-size:8.35px;line-height:9px;padding-top:5px">Current Conditions</div>
<div style="font-size:6.7px;line-height:9px;padding-top:2.5px">observed at</div>
<div style="font-size:8.35px;line-height:9px;padding-top:2.5px">Dec 5, 2020 9:00 AM (LT)</div>
</div>
<div class="a" style="left:469px;top:350px;width:140px;height:80px;background:#ff7e00;color:#fff;text-align:center;font-weight:bold;font-size:11px;line-height:15.7px;padding-top:9px">107 AQI<br>Unhealthy for Sensitive<br>Groups<br>PM2.5</div>
<div class="a" style="left:470px;top:436px;width:138px;text-align:center;font-weight:bold;font-size:6.7px;color:#222">Health Message</div>
<div class="a" style="left:472.3px;top:447px;width:132px;font-size:6.7px;line-height:11.7px;color:#555">When AQI values are between 101 and 150, members of sensitive groups may experience health effects, but the general public is unlikely to be affected.</div>
</body></html>
